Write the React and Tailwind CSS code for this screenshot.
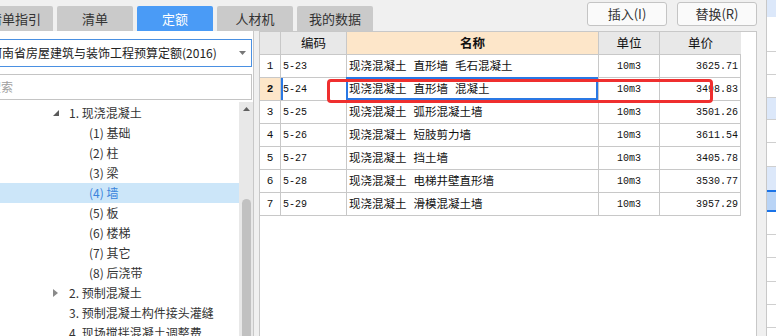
import React from 'react';

const tabs = ['清单指引', '清单', '定额', '人材机', '我的数据'];

const tree = [
  { label: '1. 现浇混凝土', level: 1, arrow: 'open' },
  { label: '(1) 基础', level: 2 },
  { label: '(2) 柱', level: 2 },
  { label: '(3) 梁', level: 2 },
  { label: '(4) 墙', level: 2, active: true },
  { label: '(5) 板', level: 2 },
  { label: '(6) 楼梯', level: 2 },
  { label: '(7) 其它', level: 2 },
  { label: '(8) 后浇带', level: 2 },
  { label: '2. 预制混凝土', level: 1, arrow: 'closed' },
  { label: '3. 预制混凝土构件接头灌缝', level: 1 },
  { label: '4. 现场搅拌混凝土调整费', level: 1 },
];

const rows = [
  { no: 1, code: '5-23', name: '现浇混凝土 直形墙 毛石混凝土', unit: '10m3', price: '3625.71' },
  { no: 2, code: '5-24', name: '现浇混凝土 直形墙 混凝土', unit: '10m3', price: '3498.83', selected: true },
  { no: 3, code: '5-25', name: '现浇混凝土 弧形混凝土墙', unit: '10m3', price: '3501.26' },
  { no: 4, code: '5-26', name: '现浇混凝土 短肢剪力墙', unit: '10m3', price: '3611.54' },
  { no: 5, code: '5-27', name: '现浇混凝土 挡土墙', unit: '10m3', price: '3405.78' },
  { no: 6, code: '5-28', name: '现浇混凝土 电梯井壁直形墙', unit: '10m3', price: '3530.77' },
  { no: 7, code: '5-29', name: '现浇混凝土 滑模混凝土墙', unit: '10m3', price: '3957.29' },
];

// right-hand strip, just the row stripes that peek in
const strip = [
  { h: 'h-[17px]', cls: 'bg-[#dce8fa]' },
  { h: 'h-[35px]', cls: 'bg-white border-b border-[#cfcfcf]' },
  { h: 'h-[23px]', cls: 'bg-white border-b border-[#cfcfcf]' },
  { h: 'h-[23px]', cls: 'bg-white border-b border-[#cfcfcf]' },
  { h: 'h-[22px]', cls: 'bg-[#dce8fa] border-b border-[#cfcfcf]' },
  { h: 'h-[23px]', cls: 'bg-white border-b border-[#cfcfcf]' },
  { h: 'h-[24px]', cls: 'bg-white border-b border-[#cfcfcf]' },
  { h: 'h-[23px]', cls: 'bg-[#dce8fa]' },
  { h: 'h-[22px]', cls: 'bg-[#b9d4f6] border-y-2 border-[#1a73e8]' },
  { h: 'h-[23px]', cls: 'bg-white border-b border-[#cfcfcf]' },
  { h: 'h-[23px]', cls: 'bg-white border-b border-[#cfcfcf]' },
  { h: 'h-[24px]', cls: 'bg-white border-b border-[#cfcfcf]' },
  { h: 'h-[23px]', cls: 'bg-white border-b border-[#cfcfcf]' },
  { h: 'h-[23px]', cls: 'bg-white border-b border-[#cfcfcf]' },
];

const ui = "font-['Noto_Sans_CJK_SC',sans-serif]";
const mono = "font-['Liberation_Mono','Noto_Sans_CJK_SC',monospace]";

function TreeArrow({ type }) {
  if (type === 'open') {
    return (
      <svg width="6" height="6" viewBox="0 0 6 6" className="mr-[10px]">
        <polygon points="6,0 6,6 0,6" fill="#5a5a5a" />
      </svg>
    );
  }
  if (type === 'closed') {
    return (
      <svg width="5" height="8" viewBox="0 0 5 8" className="mr-[11px]">
        <polygon points="0,0 5,4 0,8" fill="#8a8a8a" />
      </svg>
    );
  }
  return <span className="w-[16px]" />;
}

// name cells use wide gaps between words, like the half-width space of the original font
function Name({ text }) {
  const parts = text.split(' ');
  return (
    <span className="flex items-center">
      {parts.map((p, i) => (
        <React.Fragment key={i}>
          {i > 0 && <span className="inline-block w-[7px]" />}
          <span>{p}</span>
        </React.Fragment>
      ))}
    </span>
  );
}

export default function App() {
  return (
    <div className={`relative w-[776px] h-[336px] overflow-hidden bg-[#f0f0f0] ${ui}`}>
      <div className="flex w-[820px] h-full -ml-[24px]">
        {/* main column */}
        <div className="flex flex-col w-[790px] h-full">
          {/* top bar */}
          <div className="flex h-[31px] items-end">
            <div className="flex gap-[4px] pl-[1px]">
              {tabs.map((t) => (
                <div
                  key={t}
                  className={`w-[76px] h-[25px] flex items-center justify-center rounded-t-[2px] text-[13px] ${
                    t === '定额' ? 'bg-[#4a9bf6] text-white' : 'bg-[#cacaca] text-[#333]'
                  }`}
                >
                  {t}
                </div>
              ))}
            </div>
            <div className="ml-auto self-start mt-[2px] mr-[9px] flex gap-[10px]">
              {['插入(I)', '替换(R)'].map((b) => (
                <div
                  key={b}
                  className="w-[80px] h-[24px] flex items-center justify-center rounded-[3px] border border-[#c4c4c4] bg-[#fafafa] text-[13px] text-[#333]"
                >
                  {b}
                </div>
              ))}
            </div>
          </div>

          {/* body */}
          <div className="flex flex-1 min-h-0">
            {/* left panel */}
            <div className="w-[278px] bg-white border-r border-[#c8c8c8] flex flex-col pl-[8px] pt-[8px]">
              <div className="h-[28px] mr-[1px] border border-[#4a90e2] flex items-center pl-[5px] pr-[5px] text-[12px] text-[#222]">
                <span className="flex-1 whitespace-nowrap overflow-hidden">河南省房屋建筑与装饰工程预算定额(2016)</span>
                <svg width="7" height="4" viewBox="0 0 7 4">
                  <polygon points="0,0 7,0 3.5,4" fill="#777" />
                </svg>
              </div>
              <div className="h-[26px] mt-[7px] mr-[1px] border border-[#c4c4c4] flex items-center pl-[4px] text-[12px] text-[#a0a0a0]">
                搜索
              </div>
              <div className="flex flex-1 min-h-0 mt-[2px] -ml-[8px]">
                <div className="flex-1 pt-[1px]">
                  {tree.map((n) => (
                    <div
                      key={n.label}
                      className={`h-[20px] flex items-center text-[12px] whitespace-nowrap ${
                        n.active ? 'bg-[#cce6f9] text-[#3a84dc]' : 'text-[#333]'
                      } ${n.level === 1 ? 'pl-[77px]' : 'pl-[113px]'}`}
                    >
                      {n.level === 1 && <TreeArrow type={n.arrow} />}
                      {n.label}
                    </div>
                  ))}
                </div>
                <div className="w-[14px] bg-[#e8e8e8] flex flex-col items-center pt-[5px]">
                  <svg width="7" height="4" viewBox="0 0 7 4">
                    <polygon points="3.5,0 7,4 0,4" fill="#606060" />
                  </svg>
                  <div className="mt-[88px] w-[9px] flex-1 rounded-t-full bg-[#c1c1c1]" />
                </div>
              </div>
            </div>

            {/* middle panel */}
            <div className="ml-[5px] w-[498px] bg-white border border-b-0 border-[#c8c8c8]">
              <div className="grid grid-cols-[21px_66px_252px_61px_81px] w-[481px] border-r border-[#c8c8c8] text-[#111]">
                <div className="h-[23px] bg-[#e8e8e8] border-r border-b border-[#c8c8c8]" />
                <div className="h-[23px] bg-[#e8e8e8] border-r border-b border-[#c8c8c8] flex items-center justify-center text-[12.5px]">编码</div>
                <div className="h-[23px] bg-[#fde6c9] border-r border-b border-[#c8c8c8] flex items-center justify-center text-[12.5px] font-bold">名称</div>
                <div className="h-[23px] bg-[#e8e8e8] border-r border-b border-[#c8c8c8] flex items-center justify-center text-[12.5px]">单位</div>
                <div className="h-[23px] bg-[#e8e8e8] border-b border-[#c8c8c8] flex items-center justify-center text-[12.5px]">单价</div>

                {rows.map((r) => (
                  <React.Fragment key={r.no}>
                    <div
                      className={`h-[23px] border-r border-b border-[#c8c8c8] flex items-center justify-center text-[11px] ${mono} ${
                        r.selected ? 'bg-[#fde6c9] font-bold' : ''
                      }`}
                    >
                      {r.no}
                    </div>
                    <div className={`relative h-[23px] border-r border-b border-[#c8c8c8] flex items-center pl-[2px] text-[10px] ${mono}`}>
                      {r.selected && <span className="absolute left-0 top-0 bottom-0 w-[2px] bg-[#2a78e4]" />}
                      {r.code}
                    </div>
                    <div className="relative h-[23px] border-r border-b border-[#c8c8c8] flex items-center pl-[2px] text-[11.5px] whitespace-nowrap">
                      {r.selected && <span className="absolute -left-px -top-px right-0 bottom-0 border-2 border-[#2a78e4]" />}
                      <Name text={r.name} />
                    </div>
                    <div className={`h-[23px] border-r border-b border-[#c8c8c8] flex items-center justify-center text-[10px] ${mono}`}>
                      {r.unit}
                    </div>
                    <div className={`h-[23px] border-b border-[#c8c8c8] flex items-center justify-end pr-[3px] text-[10px] ${mono}`}>
                      {r.price}
                    </div>
                  </React.Fragment>
                ))}
              </div>
            </div>
          </div>
        </div>

        {/* right strip */}
        <div className="w-[30px] h-full border-l border-[#c8c8c8] bg-white flex flex-col">
          {strip.map((s, i) => (
            <div key={i} className={`${s.h} ${s.cls} shrink-0`} />
          ))}
        </div>
      </div>

      {/* red annotation box */}
      <div className="absolute left-[327px] top-[79px] w-[386px] h-[24px] border-[3px] border-[#ef2f2f] rounded-[4px]" />
    </div>
  );
}
